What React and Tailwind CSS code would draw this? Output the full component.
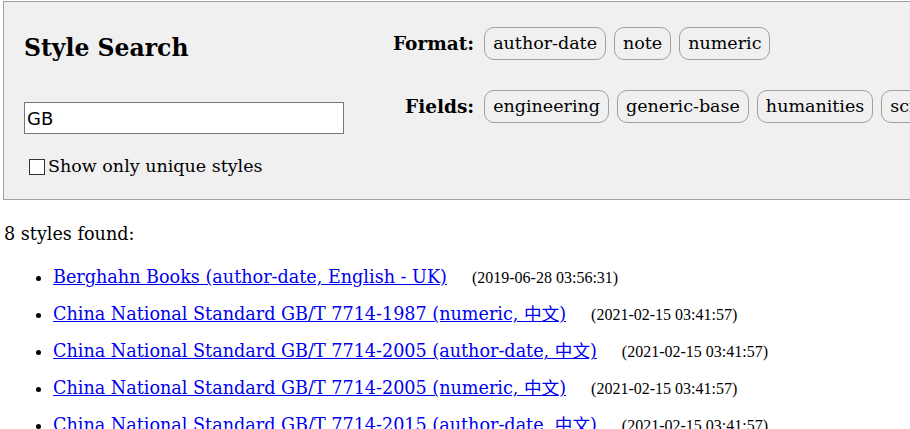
import React from "react";

const formats = ["author-date", "note", "numeric"];
const fields = ["engineering", "generic-base", "humanities", "science", "social-science"];

const styles = [
  { name: "Berghahn Books (author-date, English - UK)", date: "(2019-06-28 03:56:31)" },
  { name: "China National Standard GB/T 7714-1987 (numeric, 中文)", date: "(2021-02-15 03:41:57)" },
  { name: "China National Standard GB/T 7714-2005 (author-date, 中文)", date: "(2021-02-15 03:41:57)" },
  { name: "China National Standard GB/T 7714-2005 (numeric, 中文)", date: "(2021-02-15 03:41:57)" },
  { name: "China National Standard GB/T 7714-2015 (author-date, 中文)", date: "(2021-02-15 03:41:57)" },
  { name: "China National Standard GB/T 7714-2015 (numeric, 中文)", date: "(2021-02-15 03:41:57)" },
  { name: "China National Standard GB/T 7714-2015 (note, 中文)", date: "(2021-02-15 03:41:57)" },
  { name: "Standards Press of China (numeric, 中文)", date: "(2021-02-15 03:41:57)" },
];

function Pill({ label }) {
  return (
    <span className="shrink-0 whitespace-nowrap rounded-[10px] border border-[#a0a0a0] px-[8px] h-[33px] flex items-center text-[17.5px] leading-none">
      {label}
    </span>
  );
}

export default function App() {
  return (
    <div
      className="w-[910px] h-[429px] overflow-hidden bg-white text-black"
      style={{ fontFamily: '"DejaVu Serif", "Noto Sans CJK SC", serif' }}
    >
      <div className="ml-[3px] mt-[1px] w-[1200px] h-[199px] border border-[#a0a0a0] bg-[#f0f0f0] flex">
        <div className="w-[389px] shrink-0 pl-[20px] pt-[30px]">
          <h1 className="text-[23.5px] font-bold leading-[32px]">Style Search</h1>
          <input
            type="text"
            defaultValue="GB"
            className="mt-[38px] block w-[320px] h-[32px] border border-[#767676] bg-white px-[2px] text-[18px] outline-none"
            style={{ fontFamily: '"DejaVu Sans", sans-serif' }}
          />
          <label className="mt-[24px] ml-[5px] flex items-center text-[17.5px] leading-none">
            <span className="w-[16px] h-[16px] border border-[#333] bg-white mr-[3px]" />
            Show only unique styles
          </label>
        </div>
        <div className="pt-[25px] grid grid-cols-[auto_1fr] gap-x-[10px] gap-y-[30px] items-center content-start">
          <span className="text-right font-bold text-[18.5px]">Format:</span>
          <div className="flex gap-[8px]">
            {formats.map((f) => (
              <Pill key={f} label={f} />
            ))}
          </div>
          <span className="text-right font-bold text-[18.5px]">Fields:</span>
          <div className="flex gap-[8px]">
            {fields.map((f) => (
              <Pill key={f} label={f} />
            ))}
          </div>
        </div>
      </div>

      <p className="ml-[4px] mt-[21px] text-[17.6px]">8 styles found:</p>
      <ul className="mt-[12px] pl-[53px] list-disc">
        {styles.map((s, i) => (
          <li key={i} className="h-[37px] text-[17.6px] leading-[37px]">
            <a href="#" className="text-[#0000ee] underline">
              {s.name}
            </a>
            <span
              className="ml-[25px] text-[16px]"
              style={{ fontFamily: '"Liberation Serif", serif' }}
            >
              {s.date}
            </span>
          </li>
        ))}
      </ul>
    </div>
  );
}
